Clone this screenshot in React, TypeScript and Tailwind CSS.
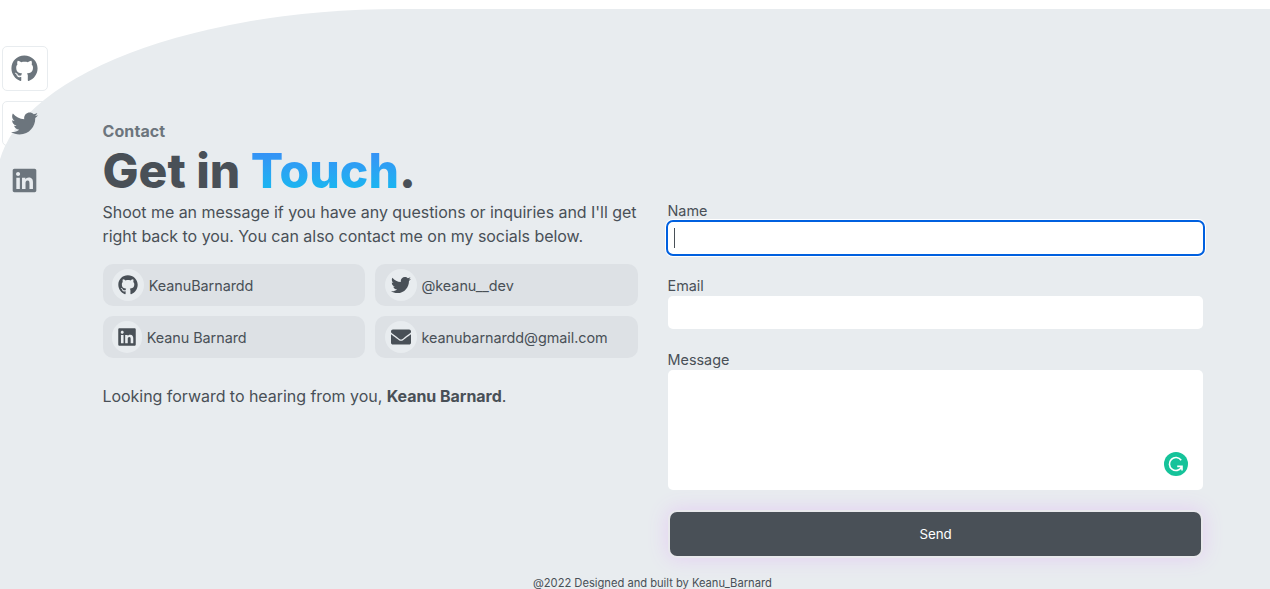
import { FaGithub, FaTwitter, FaLinkedin, FaEnvelope } from "react-icons/fa";
import type { ReactNode } from "react";

function SideLink({ children, boxed }: { children: ReactNode; boxed?: boolean }) {
  return (
    <a
      className={
        boxed
          ? "flex h-[45px] w-[46px] items-center justify-center rounded-[5px] border border-[#e8ecef] pr-[2px] text-[27px] text-[#6c757d]"
          : "flex h-[45px] w-[46px] items-center justify-center pt-[3px] pr-[1px] text-[27px] text-[#6c757d]"
      }
    >
      {children}
    </a>
  );
}

function SocialCard({ icon, label }: { icon: ReactNode; label: string }) {
  return (
    <a className="flex h-[42px] items-center gap-[5px] rounded-[10px] bg-[#dde1e5] pl-[9.25px] text-[14.4px] tracking-[-0.05px]">
      <span className="flex h-8 items-center rounded-full bg-[#e8ecef] px-1.5 text-[20px]">{icon}</span>
      <span className="pt-px">{label}</span>
    </a>
  );
}

export default function App() {
  return (
    <div className="relative h-[589px] w-full overflow-hidden bg-white pt-[9px] font-['Inter',sans-serif] text-[#495057]">
      <main className="-ml-[3px] h-[580px] rounded-tl-[403px_171px] bg-[#e8ecef] pl-[105.5px] pt-[110px]">
        <div className="flex h-[455px] gap-[30px]">
          <section className="w-[535.5px] shrink-0">
            <h2 className="text-[16px] leading-[24px] font-bold tracking-[0.1px] text-[#6c757d]">Contact</h2>
            <h1 className="text-[48px] leading-[56px] font-extrabold">
              Get in{" "}
              <span className="bg-linear-to-b from-[#3b86f7] to-[#00c0ee] bg-clip-text text-transparent">Touch</span>.
            </h1>
            <p className="mt-px text-[16px] leading-[24px] tracking-[-0.04px]">
              Shoot me an message if you have any questions or inquiries and I'll get
              <br />
              right back to you. You can also contact me on my socials below.
            </p>
            <div className="mt-4 grid grid-cols-2 gap-[10px]">
              <SocialCard icon={<FaGithub />} label="KeanuBarnardd" />
              <SocialCard icon={<FaTwitter />} label="@keanu__dev" />
              <SocialCard icon={<FaLinkedin className="w-[18px]" />} label="Keanu Barnard" />
              <SocialCard icon={<FaEnvelope />} label="keanubarnardd@gmail.com" />
            </div>
            <p className="mt-[26px] text-[16px] leading-[24px] tracking-[-0.04px]">
              Looking forward to hearing from you, <strong className="font-bold">Keanu Barnard</strong>.
            </p>
          </section>
          <form className="w-[535px] shrink-0 pt-[83px] text-[14.4px] leading-[18px]">
            <label className="-ml-[0.5px] block">Name</label>
            <div className="mt-[2px] flex h-[32px] items-center rounded-[5px] bg-white pl-[6px] outline-2 outline-[#0060df] ring-3 ring-white">
              <span className="h-5 w-px bg-[#495057]" />
            </div>
            <label className="mt-[23px] -ml-[0.5px] block">Email</label>
            <div className="mt-px h-[33px] rounded-[5px] bg-white" />
            <label className="mt-[22px] -ml-[0.5px] block">Message</label>
            <div className="mt-px flex h-[120px] items-end justify-end rounded-[5px] bg-white pr-[15px] pb-[14px]">
              <svg viewBox="0 0 24 24" className="h-6 w-6">
                <circle cx="12" cy="12" r="12" fill="#15c39a" />
                <path d="M17.2 8.2A6.5 6.5 0 1 0 17.6 15.2M13.2 14.4H18V18.6" fill="none" stroke="white" strokeWidth="1.6" />
              </svg>
            </div>
            <button
              type="button"
              className="mt-[22px] ml-[2px] block h-[44px] w-[531px] rounded-[7px] bg-[#495057] text-[13.33px] font-normal tracking-[-0.1px] text-white shadow-[0_0_0_2px_#e8e8ec,0_0_20px_3px_#e4d0f2]"
            >
              Send
            </button>
          </form>
        </div>
        <footer className="pl-[430.5px] text-[11.2px] leading-[18px] tracking-[-0.02px]">
          @2022 Designed and built by Keanu_Barnard
        </footer>
      </main>
      <nav className="absolute top-[46px] left-[2px] flex flex-col gap-[10px]">
        <SideLink boxed><FaGithub /></SideLink>
        <SideLink boxed><FaTwitter /></SideLink>
        <SideLink><FaLinkedin /></SideLink>
      </nav>
    </div>
  );
}
